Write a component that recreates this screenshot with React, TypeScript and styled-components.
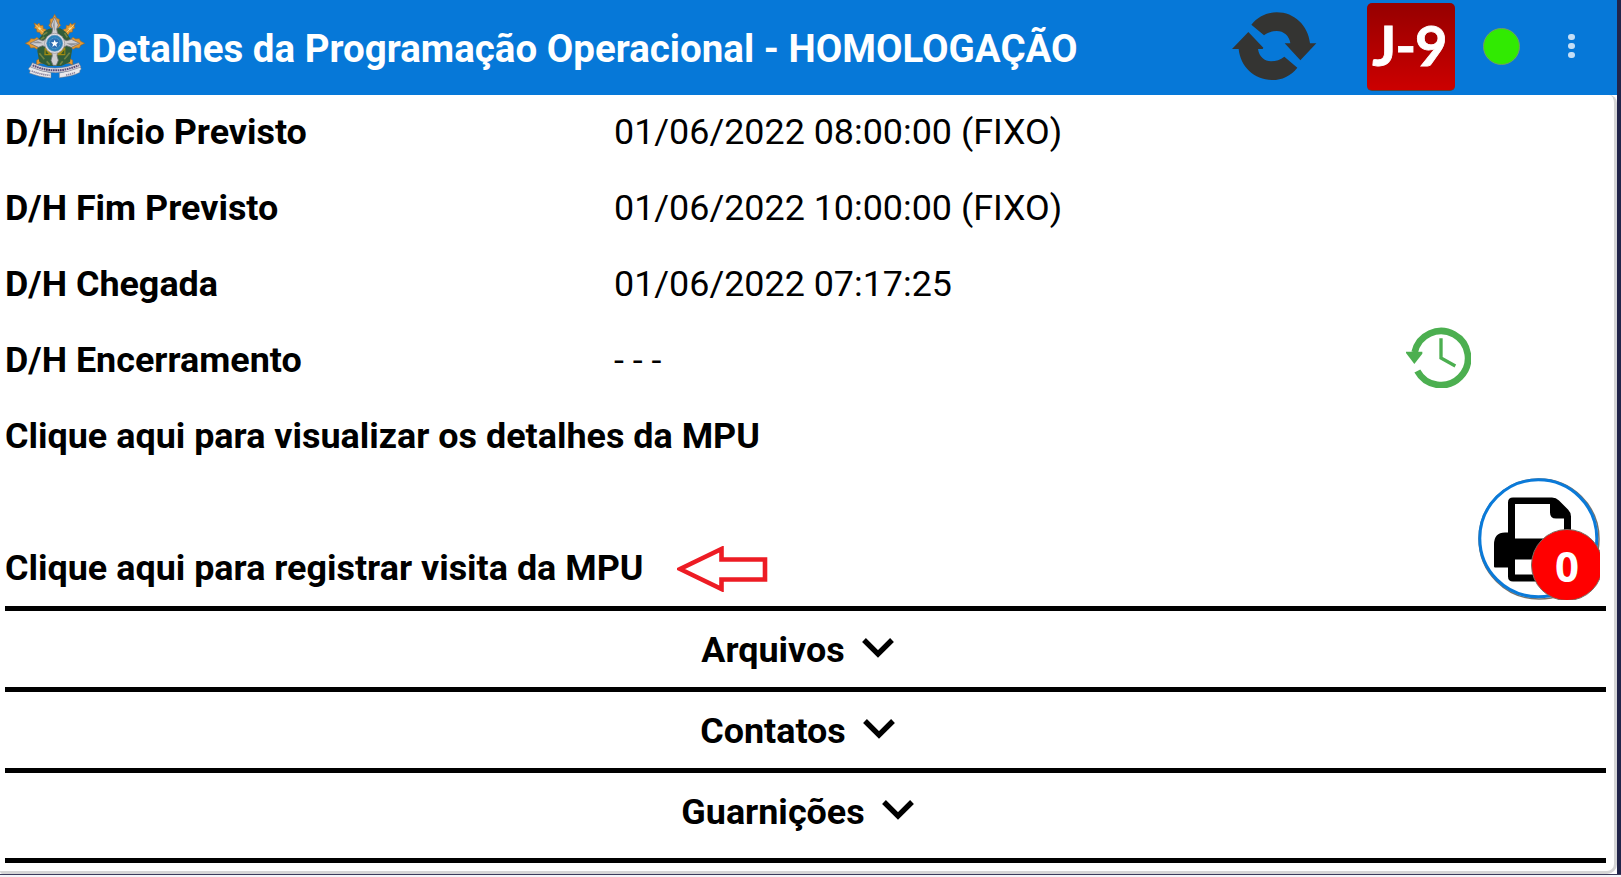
import React from "react";
import styled, { createGlobalStyle } from "styled-components";

const GlobalStyle = createGlobalStyle`
  *, *::before, *::after { box-sizing: border-box; }
  body { margin: 0; background: #f5f5f9; overflow: hidden; }
`;

const Screen = styled.div`
  display: flex;
  flex-direction: column;
  width: 1621px;
  height: 875px;
  padding-right: 4px;
  background: #21244a;
  border-bottom: 1px solid #3c3b5c;
  font-family: Roboto, "Liberation Sans", sans-serif;
  color: #000;
`;

const Header = styled.header`
  display: flex;
  align-items: flex-start;
  flex: none;
  height: 95px;
  padding-left: 24px;
  background: #0678d8;
`;

const Emblem = styled.svg`
  flex: none;
  width: 61px;
  height: 66px;
  margin-top: 14px;
`;

const Title = styled.h1`
  flex: 1;
  margin: 0 0 0 6.5px;
  padding-top: 1px;
  font-size: 38.5px;
  line-height: 96px;
  font-weight: 700;
  color: #fff;
  white-space: nowrap;
`;

const Refresh = styled.svg`
  flex: none;
  width: 84.7px;
  height: 68.7px;
  margin: 12px 49.8px 0 0;
`;

const UnitBadge = styled.div`
  flex: none;
  width: 88.5px;
  height: 88px;
  margin: 2.5px 28px 0 0;
  padding-right: 3px;
  border-radius: 5px;
  border-bottom: 1px solid #56403c;
  background: linear-gradient(#960000, #cc0000);
  color: #fff;
  font: 700 56px/84px Lato, sans-serif;
  letter-spacing: -1px;
  -webkit-text-stroke: 0.8px #fff;
  text-align: center;
`;

const StatusDot = styled.div`
  flex: none;
  width: 37px;
  height: 37px;
  margin: 27.5px 48px 0 0;
  border-radius: 50%;
  border: 1.5px solid #6f9a6b;
  background: #31ea02;
`;

const MenuDots = styled.div`
  display: flex;
  flex-direction: column;
  flex: none;
  gap: 2.6px;
  margin: 33.7px 42.4px 0 0;
`;

const MenuDot = styled.span`
  width: 6.5px;
  height: 6.5px;
  border-radius: 50%;
  background: #c5dff6;
`;

const Backdrop = styled.div`
  flex: 1;
  display: flex;
  background: #fff;
`;

const Panel = styled.main`
  position: relative;
  flex: 1;
  display: flex;
  flex-direction: column;
  padding: 0 8px 0 5px;
  border: solid #d5d5d6;
  border-width: 0 3px 3px 0;
  border-radius: 3px 8px 10px 3px;
  background: #fff;
`;

const Row = styled.div<{ $height?: number }>`
  display: grid;
  grid-template-columns: 609px 792px 1fr;
  align-items: center;
  flex: none;
  height: ${(p) => p.$height ?? 76}px;
  padding-bottom: 2px;
  font-size: 35.9px;
  line-height: 42px;
  white-space: nowrap;
`;

const Label = styled.span`
  font-weight: 700;
`;

const Value = styled.span`
  font-size: 35.87px;
  font-weight: 400;
`;

const Action = styled.div<{ $height: number; $offset?: number }>`
  display: flex;
  align-items: center;
  flex: none;
  gap: 33px;
  height: ${(p) => p.$height}px;
  margin-top: ${(p) => p.$offset ?? 0}px;
  padding-bottom: ${(p) => (p.$offset ? 0 : 2)}px;
  font-size: 35.92px;
  line-height: 42px;
  font-weight: 700;
  white-space: nowrap;
`;

const ClockIcon = styled.svg`
  width: 65px;
  height: 61px;
  margin-top: -5px;
`;

const PointerArrow = styled.svg`
  flex: none;
  width: 91px;
  height: 46px;
  margin-top: 1px;
`;

const Section = styled.section<{ $height: number }>`
  display: flex;
  justify-content: center;
  align-items: flex-start;
  flex: none;
  gap: 17px;
  height: ${(p) => p.$height}px;
  padding: 18px 16px 0 0;
  border-top: 5px solid #000;
  font-size: 35.92px;
  line-height: 42px;
  font-weight: 700;
`;

const Chevron = styled.svg`
  width: 32px;
  height: 20px;
  margin-top: 9px;
`;

const Rule = styled.div`
  flex: none;
  height: 5px;
  background: #000;
`;

const PrintButton = styled.div`
  position: absolute;
  left: 1478px;
  top: 382.5px;
  width: 122px;
  height: 122px;
  overflow: hidden;
`;

const PrintBadge = styled.div`
  position: absolute;
  left: 53px;
  top: 51px;
  width: 72px;
  height: 72px;
  border-radius: 50%;
  border: 1.5px solid #7a6a60;
  background: #ff0000;
  color: #fff;
  font: 700 42px/71px "Noto Sans", sans-serif;
  text-align: center;
`;

const times = [
  { label: "D/H Início Previsto", value: "01/06/2022 08:00:00 (FIXO)" },
  { label: "D/H Fim Previsto", value: "01/06/2022 10:00:00 (FIXO)" },
  { label: "D/H Chegada", value: "01/06/2022 07:17:25" },
  { label: "D/H Encerramento", value: "- - -", closable: true },
];

const sections = [
  { name: "Arquivos", height: 81 },
  { name: "Contatos", height: 81 },
  { name: "Guarnições", height: 90 },
];

const PoliceEmblem = () => (
  <Emblem viewBox="72 42 183 198">
    <g fill="#e69a32" stroke="#9a6a2c" strokeWidth="2">
      <path d="M102 69l10 5 5-5 4 8 8-1 1 10 8 2 0 16-15 0-4-7-8-1-1-9-7-3 3-6z" />
      <path d="M226 69l-10 5-5-5-4 8-8-1-1 10-8 2 0 16 15 0 4-7 8-1 1-9 7-3-3-6z" />
      <path d="M110 195l0-14 8-5 2-10 16-4 5 13-9 6-2 9-9 0z" />
      <path d="M218 195l0-14-8-5-2-10-16-4-5 13 9 6 2 9 9 0z" />
      <path d="M164 43l6 12 8 3-1 11 5 7-8 9-20 0-8-9 5-7-1-11 8-3z" />
      <path d="M76 130l12-6 4-8 11 1 8-5 8 8v20l-8 8-8-5-11 1-4-8z" />
      <path d="M254 130l-12-6-4-8-11 1-8-5-8 8v20l8 8 8-5 11 1 4-8z" />
    </g>
    <g stroke="#fff0a5" strokeWidth="2">
      <path d="M108 76l22 22M114 85l10 1M119 90v-10M221 76l-22 22M215 85l-10 1M210 90V80" />
    </g>
    <path d="M133 94l14-8 34-1 17 11 14 22 4 34-6 34-26 12h-40l-26-12-6-32 4-36 12-16z" fill="#315d39" />
    <path d="M128 105l14-8M123 118l10-7M194 99l8 13M118 160l15 18M209 158l-16 20M140 184l9 10M188 184l-8 10" stroke="#708344" strokeWidth="5" />
    <path d="M134 143l13 3 17 12 19-13 13-3v24h-26l-6-5-7 5h-24z" fill="#a08b13" />
    <path d="M137 150l9 12h-9zM193 149l-10 13h10z" fill="#385b28" />
    <path d="M164 51l11 24-5 12 4 20 12 9 14 6 14-4 25 12-25 12-14-5-14 6-12 8-3 16 4 14-6 15h-10l-6-15 4-14-3-16-12-8-14-6-13 5-25-12 25-12 13 4 14-6 12-9 4-20-5-12z" fill="#cfced1" stroke="#75757a" strokeWidth="2.5" />
    <path d="M164 55l-5 21 5 19zM91 130l23-6 15 6zM238 130l-24 7-15-7z" fill="#8e9096" />
    <circle cx="164" cy="130" r="30" fill="#e3dfe4" stroke="#938e91" strokeWidth="2" />
    <circle cx="164" cy="130" r="24" fill="#287fba" stroke="#5b91b5" strokeWidth="2" />
    <circle cx="164" cy="130" r="16" fill="#2c6eb3" stroke="#79b4d6" strokeWidth="2" strokeDasharray="3 2" />
    <path d="M164 119l3 8 8 0-6 6 2 8-7-5-7 5 2-8-6-6 8 0z" fill="#fff" />
    <path d="M91 199l-6 8 6 5-3 7q30 12 65 15v-16q-32-4-62-19zM239 199l5 8-5 5 1 5q-24 13-62 16v-14q32-5 61-20z" fill="#e9e9ec" stroke="#77747d" strokeWidth="1.5" />
    <path d="M95 213q26 10 54 13M198 225q18-3 28-8" fill="none" stroke="#8b839c" strokeWidth="5" strokeDasharray="4 2" />
    <path d="M97 188q67 32 139 0l7 13q-76 34-152 0z" fill="#d7d4db" stroke="#777482" strokeWidth="1.5" />
    <path d="M98 196q67 30 138 0" fill="none" stroke="#5b4d79" strokeWidth="6" strokeDasharray="5 2" />
  </Emblem>
);

export default function App() {
  return (
    <>
      <GlobalStyle />
      <Screen>
        <Header>
          <PoliceEmblem />
          <Title>Detalhes da Programação Operacional - HOMOLOGAÇÃO</Title>
          <Refresh viewBox="96 36 254 206" fill="#343432">
            <path d="M154 74C174 49 200 37 230 37C284 37 324 77 330 130H349L301 181L254 130H271C268 107 251 93 230 93C215 93 203 98 192 106Z" />
            <path d="M292 203C272 228 246 240 217 240C163 240 121 200 116 147H96L145 96L190 143L188 147H174C177 170 194 184 213 184C229 184 241 179 253 170Z" />
          </Refresh>
          <UnitBadge>J-9</UnitBadge>
          <StatusDot />
          <MenuDots>
            <MenuDot />
            <MenuDot />
            <MenuDot />
          </MenuDots>
        </Header>
        <Backdrop>
          <Panel>
            {times.map((t) => (
              <Row key={t.label}>
                <Label>{t.label}</Label>
                <Value>{t.value}</Value>
                {t.closable && (
                  <ClockIcon viewBox="78 54 195 183">
                    <path d="M104 130A81 81 0 1 1 112 186" fill="none" stroke="#4caf50" strokeWidth="20" />
                    <path d="M78 128H127V134L103 165L78 132Z" fill="#4caf50" />
                    <path d="M183 88V147L226 171" fill="none" stroke="#4caf50" strokeWidth="10" />
                  </ClockIcon>
                )}
              </Row>
            ))}
            <Action $height={76}>Clique aqui para visualizar os detalhes da MPU</Action>
            <Action $height={76} $offset={55}>
              Clique aqui para registrar visita da MPU
              <PointerArrow viewBox="0 0 91 46">
                <path d="M3 23L44.5 3V13.5H88V33.5H44.5V43Z" fill="none" stroke="#ed1c24" strokeWidth="4.6" />
              </PointerArrow>
            </Action>
            {sections.map((s) => (
              <Section key={s.name} $height={s.height}>
                {s.name}
                <Chevron viewBox="0 0 32 20">
                  <path d="M2 2L16 16L30 2" fill="none" stroke="#000" strokeWidth="5.4" />
                </Chevron>
              </Section>
            ))}
            <Rule />
            <PrintButton>
              <svg width="122" height="122" viewBox="0 0 122 122">
                <circle cx="61" cy="61" r="60" fill="#fff" stroke="#77736c" strokeWidth="1.5" />
                <circle cx="60.3" cy="60.3" r="58.5" fill="#fff" stroke="#0a7ad9" strokeWidth="3" />
                <path d="M35 19.500H74Q78 19.500 81 22.500L90 31.500Q93 34.500 93 38.500V103.500H35Q30 103.500 30 98.500V89.500H17Q16 89.500 16 88.500V66.500Q16 54.500 27 54.500H30V24.500Q30 19.500 35 19.500Z" />
                <path d="M37 26H72V34.500Q72 40.500 78 40.500H86V60.500H37ZM37 81.500H86V96.500H37Z" fill="#fff" />
              </svg>
              <PrintBadge>0</PrintBadge>
            </PrintButton>
          </Panel>
        </Backdrop>
      </Screen>
    </>
  );
}
